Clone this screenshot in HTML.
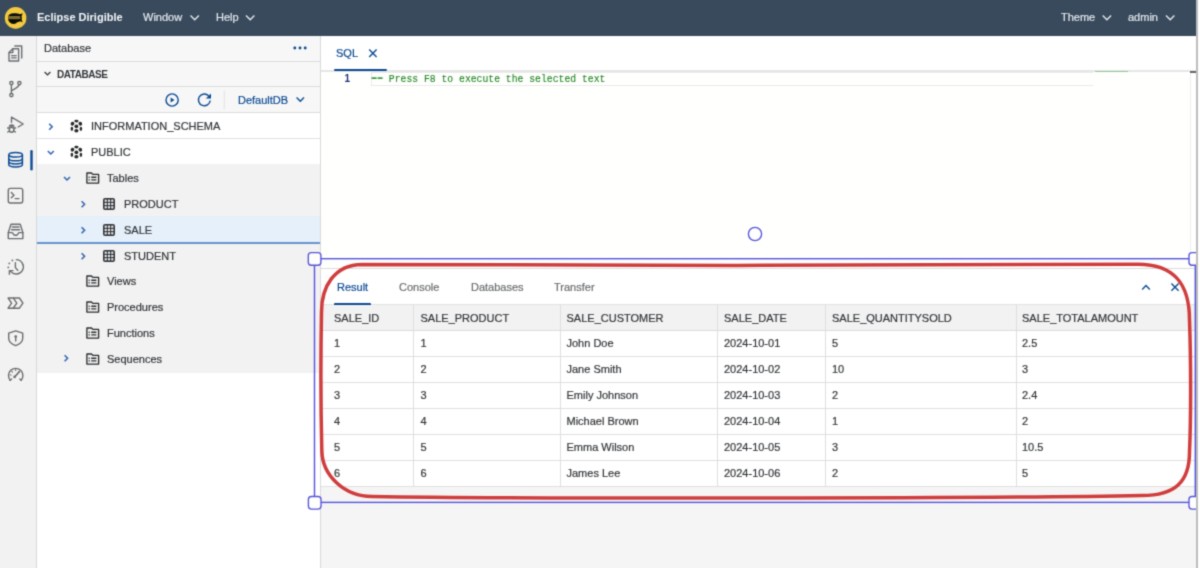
<!DOCTYPE html>
<html><head><meta charset="utf-8">
<style>
*{box-sizing:border-box;margin:0;padding:0}
html,body{width:1200px;height:568px;overflow:hidden;background:#fff;font-family:"Liberation Sans",sans-serif;color:#32363a}
.a{position:absolute}
.t{position:absolute;white-space:nowrap;font-size:11px;line-height:12px;-webkit-text-stroke:0.2px currentColor}
#hdr{left:0;top:0;width:1196px;height:36px;background:#394a5c;z-index:1}
#hdr .t{color:#e3e8ee}
#edge{left:1196px;top:0;width:2px;height:568px;background:#bdbdbd}
#side{left:0;top:35px;width:37px;height:533px;background:#f2f2f2;border-right:1px solid #d8d8d8}
#lp{left:37px;top:35px;width:284px;height:533px;background:#fff;border-right:1px solid #d9d9d9}
.row{position:absolute;left:0;width:283px;height:26px}
#ed{left:321px;top:35px;width:875px;height:233px;background:#fffffe}
#bp{left:321px;top:268px;width:875px;height:300px;background:#f5f5f5;border-top:1px solid #dcdcdc}
.grey{color:#6a6d70}
.blue{color:#0b4a92}
.mono{font-family:"Liberation Mono",monospace}
</style></head><body><svg width="0" height="0" style="position:absolute"><filter id="bl" x="0" y="0" width="100%" height="100%" color-interpolation-filters="sRGB"><feConvolveMatrix order="3" kernelMatrix="1 4 1 4 16 4 1 4 1" edgeMode="duplicate"/></filter></svg><div id="wrap" style="position:absolute;left:0;top:0;width:1200px;height:568px;filter:url(#bl)">
<!-- header -->
<div id="hdr" class="a">
  <svg class="a" style="left:4px;top:7px" width="24" height="24" viewBox="0 0 24 24">
    <circle cx="11.6" cy="10.9" r="10.8" fill="#f4cb3f"/>
    <path d="M4 10.5 C4.2 7.6 6.5 6.3 10 6.3 C12.5 6.3 14.5 6.5 16 7.2 L18.8 6.3 L17.6 9 C17.9 10 17.9 11.4 17.6 12.5 L18.6 15.2 L16.2 14.2 C15 14.8 14 15.1 13 15.3 C12.3 16.6 11.5 16.9 9.5 16.9 C7.5 16.9 6.6 16.4 6 15.6 C4.8 14.6 3.9 12.8 4 10.5 Z" fill="#0a0a0a"/>
    <rect x="4.1" y="9" width="12.2" height="3.2" fill="#7c6c2a"/>
  </svg>
  <div class="t" style="left:37px;top:11px;font-weight:bold;color:#f4f6f8;-webkit-text-stroke:0">Eclipse Dirigible</div>
  <div class="t" style="left:143px;top:11px">Window</div>
  <div class="t" style="left:216px;top:11px">Help</div>
  <div class="t" style="left:1061px;top:11px">Theme</div>
  <div class="t" style="left:1128px;top:11px">admin</div>
  <svg class="a" style="left:0;top:0" width="1196" height="35">
    <g fill="none" stroke="#e3e8ee" stroke-width="1.4">
      <path d="M190.5 15.5 L194.7 19.7 L198.9 15.5"/>
      <path d="M246 15.5 L250.2 19.7 L254.4 15.5"/>
      <path d="M1102.7 15.5 L1106.9 19.7 L1111.1 15.5"/>
      <path d="M1166 15.5 L1170.2 19.7 L1174.4 15.5"/>
    </g>
  </svg>
</div>

<!-- sidebar -->
<div id="side" class="a"></div>
<svg class="a" style="left:0;top:0" width="37" height="568">
  <g fill="none" stroke="#6a6d70" stroke-width="1.4" stroke-linecap="round" stroke-linejoin="round">
    <!-- documents -->
    <path d="M14.8 46 H21.7 V58"/>
    <path d="M12.8 48.8 H18.6 V61 H9 V52.6 Z"/>
    <path d="M9 52.6 H12.8 V48.8"/>
    <path d="M11.6 55.6 H16.2 M11.6 57.9 H16.2"/>
    <!-- git branch -->
    <circle cx="11.4" cy="83.1" r="1.6"/>
    <circle cx="19.4" cy="83.1" r="1.6"/>
    <circle cx="11.4" cy="95.1" r="1.6"/>
    <path d="M11.4 84.7 V93.5"/>
    <path d="M19.1 84.7 Q18.6 86.6 15.6 88.3 L11.6 90.6"/>
    <!-- debug -->
    <path d="M11.5 122.2 V117.2 L23.2 124 L18.2 127"/>
    <ellipse cx="11.6" cy="129.7" rx="2.3" ry="2.5"/>
    <path d="M7.6 128 H9.2 M14 128 H15.6 M7.8 132 L9.3 131 M15.4 132 L13.9 131"/>
    <!-- terminal -->
    <rect x="8.3" y="188.4" width="14.4" height="14.6" rx="2"/>
    <path d="M11.3 192.6 L14 195.2 L11.3 197.8 M15.2 198.6 H19"/>
    <!-- inbox -->
    <path d="M11 224.2 H20.2 L22.9 232.6 V238.6 H8.3 V232.6 Z"/>
    <path d="M8.3 232.6 H12.3 L14.2 235.2 H17 L18.9 232.6 H22.9"/>
    <path d="M12.2 227 H19 M11.6 229.7 H19.6"/>
    <!-- history -->
    <path d="M16.3 259.6 A7.2 7.2 0 1 1 10.6 271.4"/>
    <path d="M15.4 262.6 V267.6 L17.8 270.2"/>
    <path d="M9.4 274.2 V270.6 H13"/>
    <!-- process chevrons -->
    <path d="M8.1 298 H19.4 L22.9 303.1 L19.4 308.2 H8.1 L11.6 303.1 Z"/>
    <path d="M13.4 298.2 L16.8 303.1 L13.4 308"/>
    <!-- shield -->
    <path d="M15.7 330.9 L22.7 333.2 V338.5 Q22.5 343 15.7 345.6 Q8.9 343 8.7 338.5 V333.2 Z"/>
    <path d="M15.7 338 V341"/>
    <!-- gauge -->
    <path d="M10.2 380.2 A7.2 7.2 0 1 1 21.2 380.2"/>
    <path d="M10.2 380.2 L11.6 379 M21.2 380.2 L19.8 379"/>
    <path d="M15.7 369.6 V370.6 M11.9 371.4 L12.6 372.1 M19.5 371.4 L18.8 372.1 M10.2 375 H11.2" stroke-width="1.1"/>
    <path d="M14.6 377 L19.4 371.6" stroke-width="1.6"/>
  </g>
  <g fill="#6a6d70">
    <path d="M8.6 126.8 A3 2.6 0 0 1 14.6 126.8 Z"/>
    <circle cx="12.4" cy="260.4" r="0.9"/><circle cx="9.3" cy="263.4" r="0.9"/><circle cx="8.3" cy="267.4" r="0.9"/>
    <circle cx="15.7" cy="336.6" r="1.4"/>
    <circle cx="14.6" cy="376.9" r="1.3"/>
  </g>
  <!-- database active -->
  <g fill="none" stroke="#0b4a92" stroke-width="1.5">
    <ellipse cx="15.6" cy="154.8" rx="6.8" ry="2.3"/>
    <path d="M8.8 154.8 V164.6 Q8.8 167 15.6 167 Q22.4 167 22.4 164.6 V154.8"/>
    <path d="M8.8 158.4 Q8.8 160.8 15.6 160.8 Q22.4 160.8 22.4 158.4"/>
    <path d="M8.8 161.6 Q8.8 164 15.6 164 Q22.4 164 22.4 161.6"/>
  </g>
  <rect x="30.3" y="150" width="2.4" height="20.5" rx="1.2" fill="#0b4a92"/>
</svg>

<!-- left panel -->
<div id="lp" class="a">
  <div class="a" style="left:0;top:0;width:283px;height:27px;background:#f7f7f7;border-bottom:1px solid #dcdcdc"></div>
  <div class="t" style="left:7px;top:7px">Database</div>
  <div class="a" style="left:0;top:27px;width:283px;height:25px;background:#f7f7f7;border-bottom:1px solid #dcdcdc"></div>
  <div class="t" style="left:20px;top:34px;font-weight:bold;font-size:10px;letter-spacing:-0.45px;-webkit-text-stroke:0">DATABASE</div>
  <div class="a" style="left:0;top:52px;width:283px;height:26px;background:#f7f7f7;border-bottom:1px solid #dcdcdc"></div>
  <div class="t blue" style="left:201px;top:59px">DefaultDB</div>
  <!-- rows -->
  <div class="row" style="top:78px;background:#fff;border-bottom:1px solid #e2e2e2"></div>
  <div class="row" style="top:104px;height:25px;background:#fff"></div>
  <div class="row" style="top:129px;height:209px;background:#f2f2f2"></div>
  <div class="row" style="top:181px;height:28px;background:#e5f0fa;border-bottom:2px solid #6793cf"></div>
  <div class="t" style="left:54px;top:85px">INFORMATION_SCHEMA</div>
  <div class="t" style="left:54px;top:111px">PUBLIC</div>
  <div class="t" style="left:70px;top:137px">Tables</div>
  <div class="t" style="left:87px;top:163px">PRODUCT</div>
  <div class="t" style="left:87px;top:189px">SALE</div>
  <div class="t" style="left:87px;top:215px">STUDENT</div>
  <div class="t" style="left:70px;top:240px">Views</div>
  <div class="t" style="left:70px;top:266px">Procedures</div>
  <div class="t" style="left:70px;top:292px">Functions</div>
  <div class="t" style="left:70px;top:318px">Sequences</div>
</div>
<svg class="a" style="left:0;top:0" width="321" height="400">
  <!-- panel header dots -->
  <g fill="#0b4a92"><circle cx="294.8" cy="48" r="1.45"/><circle cx="300" cy="48" r="1.45"/><circle cx="305.2" cy="48" r="1.45"/></g>
  <!-- DATABASE chevron -->
  <path d="M44.6 72 L47.5 74.9 L50.4 72" fill="none" stroke="#32363a" stroke-width="1.3"/>
  <!-- toolbar -->
  <g fill="none" stroke="#0b4a92" stroke-width="1.4">
    <circle cx="172.1" cy="100" r="6.1"/>
    <path d="M210.2 100.5 A5.9 5.9 0 1 1 208.6 95.8"/>
    <path d="M301 97.6 L297.3 101.3 L293.6 97.6" transform="translate(3,0)"/>
  </g>
  <path d="M170.6 97.4 L174.5 100 L170.6 102.6Z" fill="#0b4a92"/>
  <path d="M205.8 98.6 L211 98.6 L211 93.4Z" fill="#0b4a92"/>
  <rect x="223.8" y="90.5" width="1" height="19" fill="#e2e2e2"/>
  <!-- tree chevrons -->
  <g fill="none" stroke="#2f62ae" stroke-width="1.5">
    <path d="M49.2 123.8 L52.2 126.8 L49.2 129.8"/>
    <path d="M47.8 151 L50.8 154 L53.8 151"/>
    <path d="M64 177 L67 180 L70 177"/>
    <path d="M81.6 201.2 L84.6 204.2 L81.6 207.2"/>
    <path d="M81.6 227.2 L84.6 230.2 L81.6 233.2"/>
    <path d="M81.6 253.2 L84.6 256.2 L81.6 259.2"/>
    <path d="M64.6 355.2 L67.6 358.2 L64.6 361.2"/>
  </g>
  <!-- schema icons -->
  <g id="sch" fill="#26282b">
    <ellipse cx="76.4" cy="121.1" rx="2.1" ry="1.4"/>
    <ellipse cx="72.5" cy="123.7" rx="1.8" ry="2" transform="rotate(30 72.5 123.7)"/>
    <ellipse cx="80.3" cy="123.7" rx="1.8" ry="2" transform="rotate(-30 80.3 123.7)"/>
    <circle cx="76.4" cy="126.3" r="1.9"/>
    <ellipse cx="71.9" cy="128.8" rx="1.3" ry="2.1"/>
    <ellipse cx="80.9" cy="128.8" rx="1.3" ry="2.1"/>
    <ellipse cx="76.4" cy="130.8" rx="2.1" ry="1.7"/>
  </g>
  <use href="#sch" y="26"/>
  <!-- folder list icons -->
  <g id="fl" fill="none" stroke="#2a2d30" stroke-width="1.35" stroke-linejoin="round">
    <path d="M86.9 173 H91.5 L92.8 174.4 H98.6 V183.1 H86.9 Z"/>
    <path d="M91.2 177.2 H96.4 M91.2 179.8 H96.4"/>
  </g>
  <g fill="#32363a"><rect x="88.6" y="176.6" width="1.3" height="1.3"/><rect x="88.6" y="179.2" width="1.3" height="1.3"/></g>
  <use href="#fl" y="103"/><use href="#fl" y="129"/><use href="#fl" y="155"/><use href="#fl" y="181"/>
  <g fill="#32363a"><rect x="88.6" y="279.6" width="1.3" height="1.3"/><rect x="88.6" y="282.2" width="1.3" height="1.3"/>
  <rect x="88.6" y="305.6" width="1.3" height="1.3"/><rect x="88.6" y="308.2" width="1.3" height="1.3"/>
  <rect x="88.6" y="331.6" width="1.3" height="1.3"/><rect x="88.6" y="334.2" width="1.3" height="1.3"/>
  <rect x="88.6" y="357.6" width="1.3" height="1.3"/><rect x="88.6" y="360.2" width="1.3" height="1.3"/></g>
  <!-- grid icons -->
  <g id="gr">
    <rect x="103" y="198" width="12" height="12" rx="2" fill="#32363a"/>
    <g fill="#e8e8e8">
      <rect x="104.6" y="199.6" width="2.2" height="2.2"/><rect x="107.9" y="199.6" width="2.2" height="2.2"/><rect x="111.2" y="199.6" width="2.2" height="2.2"/>
      <rect x="104.6" y="202.9" width="2.2" height="2.2"/><rect x="107.9" y="202.9" width="2.2" height="2.2"/><rect x="111.2" y="202.9" width="2.2" height="2.2"/>
      <rect x="104.6" y="206.2" width="2.2" height="2.2"/><rect x="107.9" y="206.2" width="2.2" height="2.2"/><rect x="111.2" y="206.2" width="2.2" height="2.2"/>
    </g>
  </g>
  <use href="#gr" y="26"/><use href="#gr" y="52"/>
</svg>

<!-- editor -->
<div id="ed" class="a">
  <div class="a" style="left:0;top:0;width:875px;height:37px;background:#fff;border-bottom:2px solid #e6e6e6"></div>
  <div class="t blue" style="left:15px;top:12px">SQL</div>
  <div class="a" style="left:13px;top:33.6px;width:52.5px;height:2.6px;background:#0b4a92;border-radius:1px"></div>
  <div class="a" style="left:50px;top:37px;width:722px;height:14px;border:1px solid #eaeaea;border-right:0"></div>
  <div class="t" style="left:23.5px;top:37.5px;font-size:10px;font-weight:bold;color:#1b2f7a;-webkit-text-stroke:0">1</div>
  <div class="t mono" style="white-space:pre;left:50.3px;top:39px;font-size:9.75px;color:#1f861f;transform:scaleY(1.18);transform-origin:0 9px;-webkit-text-stroke:0.1px currentColor">   Press F8 to execute the selected text</div>
  <svg class="a" style="left:50px;top:40px" width="14" height="6"><path d="M0.6 3.1 H5.6 M6.6 3.1 H11.6" stroke="#3f9a3f" stroke-width="1.8"/></svg>
  <div class="a" style="left:869px;top:37px;width:6px;height:196px;border-left:1px solid #efefef;background:#fff"></div>
  <div class="a" style="left:869px;top:36px;width:6px;height:2px;background:#666"></div>
  <div class="a" style="left:774px;top:36px;width:33px;height:1px;background:#8fc98f"></div>
</div>
<svg class="a" style="left:0;top:0" width="400" height="80">
  <path d="M369.2 49.6 L376.6 57 M376.6 49.6 L369.2 57" stroke="#0b4a92" stroke-width="1.4" fill="none"/>
</svg>

<!-- bottom panel -->
<div id="bp" class="a">
  <div class="a" style="left:0;top:0;width:875px;height:37px;background:#fff;border-bottom:2px solid #e2e2e2"></div>
  <div class="t blue" style="left:16px;top:12px">Result</div>
  <div class="t grey" style="left:78px;top:12px">Console</div>
  <div class="t grey" style="left:150px;top:12px">Databases</div>
  <div class="t grey" style="left:233px;top:12px">Transfer</div>
  <div class="a" style="left:13px;top:34px;width:37px;height:2.6px;background:#0b4a92;border-radius:1px"></div>
</div>
<svg class="a" style="left:1130px;top:275px" width="60" height="25">
  <g fill="none" stroke="#0b4a92" stroke-width="1.4">
    <path d="M12.2 14.4 L16 10.6 L19.8 14.4"/>
    <path d="M41.4 8.6 L48.6 15.8 M48.6 8.6 L41.4 15.8"/>
  </g>
</svg>
<!-- table -->
<div id="tbl" class="a" style="left:321px;top:305px;width:875px;height:182px">
  <div class="a" style="left:0;top:0;width:875px;height:26px;background:#f2f2f2;border-bottom:1px solid #dcdcdc"></div>
  <div class="a" style="left:0;top:26px;width:875px;height:156px;background:#fff"></div>
  <div class="a" style="left:0;top:51px;width:875px;height:1px;background:#e0e0e0"></div>
  <div class="a" style="left:0;top:77px;width:875px;height:1px;background:#e0e0e0"></div>
  <div class="a" style="left:0;top:103px;width:875px;height:1px;background:#e0e0e0"></div>
  <div class="a" style="left:0;top:129px;width:875px;height:1px;background:#e0e0e0"></div>
  <div class="a" style="left:0;top:155px;width:875px;height:1px;background:#e0e0e0"></div>
  <div class="a" style="left:0;top:181px;width:875px;height:1px;background:#e0e0e0"></div>
  <div class="a" style="left:92px;top:0;width:1px;height:182px;background:#dedede"></div>
  <div class="a" style="left:239px;top:0;width:1px;height:182px;background:#dedede"></div>
  <div class="a" style="left:396px;top:0;width:1px;height:182px;background:#dedede"></div>
  <div class="a" style="left:504px;top:0;width:1px;height:182px;background:#dedede"></div>
  <div class="a" style="left:695px;top:0;width:1px;height:182px;background:#dedede"></div>
</div>
<div id="cells">
<div class="t" style="left:334px;top:311.5px">SALE_ID</div>
<div class="t" style="left:420.5px;top:311.5px">SALE_PRODUCT</div>
<div class="t" style="left:566.5px;top:311.5px">SALE_CUSTOMER</div>
<div class="t" style="left:724px;top:311.5px">SALE_DATE</div>
<div class="t" style="left:832px;top:311.5px">SALE_QUANTITYSOLD</div>
<div class="t" style="left:1022px;top:311.5px">SALE_TOTALAMOUNT</div>
<div class="t" style="left:334px;top:337px">1</div>
<div class="t" style="left:420.5px;top:337px">1</div>
<div class="t" style="left:566.5px;top:337px">John Doe</div>
<div class="t" style="left:724px;top:337px">2024-10-01</div>
<div class="t" style="left:832px;top:337px">5</div>
<div class="t" style="left:1022px;top:337px">2.5</div>
<div class="t" style="left:334px;top:363px">2</div>
<div class="t" style="left:420.5px;top:363px">2</div>
<div class="t" style="left:566.5px;top:363px">Jane Smith</div>
<div class="t" style="left:724px;top:363px">2024-10-02</div>
<div class="t" style="left:832px;top:363px">10</div>
<div class="t" style="left:1022px;top:363px">3</div>
<div class="t" style="left:334px;top:389px">3</div>
<div class="t" style="left:420.5px;top:389px">3</div>
<div class="t" style="left:566.5px;top:389px">Emily Johnson</div>
<div class="t" style="left:724px;top:389px">2024-10-03</div>
<div class="t" style="left:832px;top:389px">2</div>
<div class="t" style="left:1022px;top:389px">2.4</div>
<div class="t" style="left:334px;top:415px">4</div>
<div class="t" style="left:420.5px;top:415px">4</div>
<div class="t" style="left:566.5px;top:415px">Michael Brown</div>
<div class="t" style="left:724px;top:415px">2024-10-04</div>
<div class="t" style="left:832px;top:415px">1</div>
<div class="t" style="left:1022px;top:415px">2</div>
<div class="t" style="left:334px;top:441px">5</div>
<div class="t" style="left:420.5px;top:441px">5</div>
<div class="t" style="left:566.5px;top:441px">Emma Wilson</div>
<div class="t" style="left:724px;top:441px">2024-10-05</div>
<div class="t" style="left:832px;top:441px">3</div>
<div class="t" style="left:1022px;top:441px">10.5</div>
<div class="t" style="left:334px;top:467px">6</div>
<div class="t" style="left:420.5px;top:467px">6</div>
<div class="t" style="left:566.5px;top:467px">James Lee</div>
<div class="t" style="left:724px;top:467px">2024-10-06</div>
<div class="t" style="left:832px;top:467px">2</div>
<div class="t" style="left:1022px;top:467px">5</div>
</div><!--/cells-->

<!-- overlays -->
<svg class="a" style="left:0;top:0" width="1200" height="568">
  <rect x="314.5" y="258.7" width="880.8" height="243.7" fill="none" stroke="#5252dc" stroke-width="1.4"/>
  <path d="M362 264.4 C560 265.9 960 265.6 1138 264.2 C1175 264.2 1189.5 285 1189.5 320 C1191 360 1191 420 1189.5 452 C1189.5 482 1175 495.5 1142 495.5 C1000 498.6 520 498.9 372 496.5 C345 496.5 322 476 321.8 450 C320.8 410 320.8 350 321.5 312 C321.5 287 334 264.6 362 264.4 Z" fill="none" stroke="#d03c3c" stroke-width="3.5"/>
  <g fill="#fff" stroke="#5454d8" stroke-width="1.35">
    <rect x="308.3" y="252.6" width="12.6" height="12.6" rx="3"/>
    <rect x="1189" y="252.6" width="12.6" height="12.6" rx="3"/>
    <rect x="308.4" y="496.5" width="12.6" height="12.6" rx="3"/>
    <rect x="1189" y="496.5" width="12.6" height="12.6" rx="3"/>
    <circle cx="755" cy="234" r="6.6" stroke-width="1.35"/>
  </g>
</svg>
<div id="edge" class="a"></div>
<div class="a" style="left:1198px;top:0;width:2px;height:568px;background:#fff"></div>
</div></body></html>
